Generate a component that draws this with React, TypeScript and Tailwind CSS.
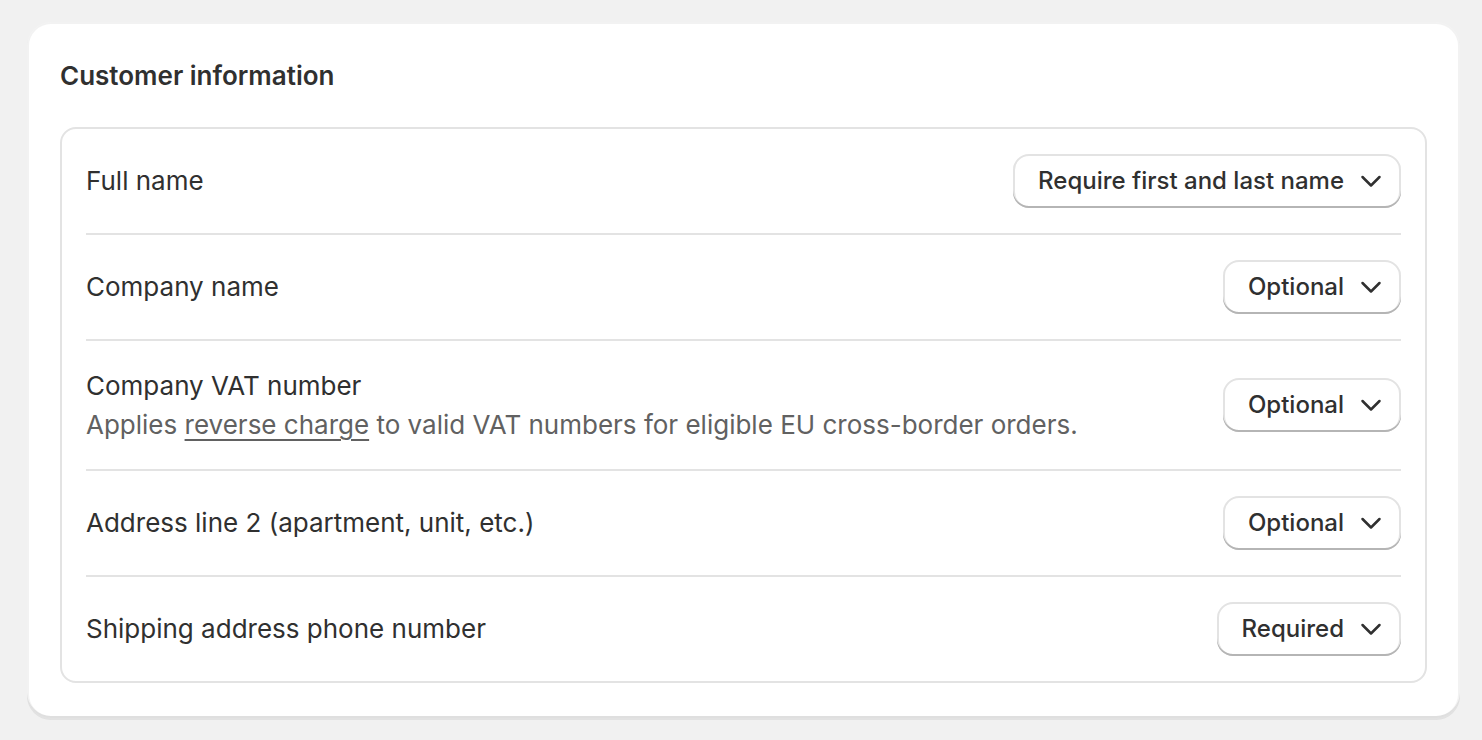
import { ReactNode } from "react"

type Row = {
  label: string
  hint?: ReactNode
  value: string
}

const rows: Row[] = [
  { label: "Full name", value: "Require first and last name" },
  { label: "Company name", value: "Optional" },
  {
    label: "Company VAT number",
    hint: (
      <>
        Applies{" "}
        <span className="underline decoration-[2px] underline-offset-[5px]">reverse charge</span> to valid VAT
        numbers for eligible EU cross-border orders.
      </>
    ),
    value: "Optional",
  },
  { label: "Address line 2 (apartment, unit, etc.)", value: "Optional" },
  { label: "Shipping address phone number", value: "Required" },
]

function Chevron() {
  return (
    <svg width="40" height="40" viewBox="0 0 20 20" fill="none" className="shrink-0">
      <path d="M5.75 8L10 12.25L14.25 8" stroke="#303030" strokeWidth="1.25" strokeLinecap="round" strokeLinejoin="round" />
    </svg>
  )
}

function SelectButton({ value }: { value: string }) {
  return (
    <button className="flex h-[54px] items-center rounded-[16px] bg-white pl-[25px] pr-[10px] text-[24px] font-[550] text-[#303030] shadow-[inset_0_-2px_0_0_#b5b5b5,inset_0_0_0_2px_#e3e3e3]">
      <span className="mr-[7px]">{value}</span>
      <Chevron />
    </button>
  )
}

export default function App() {
  return (
    <div
      className="min-h-[740px] bg-[#f1f1f1] pl-[27px] pr-[22px] pt-[22px] text-[#303030]"
      style={{ fontFamily: "Inter, 'Noto Sans', sans-serif" }}
    >
      <div className="rounded-[24px] bg-white px-[33px] pb-[35px] pt-[36px] shadow-[0_2px_0_0_rgba(26,26,26,0.07),inset_0_0_0_2px_rgba(0,0,0,0.05),inset_0_-2px_0_0_rgba(0,0,0,0.08)]">
        <h2 className="mb-[33px] text-[26px] font-semibold leading-[36px]">Customer information</h2>

        <div className="rounded-[16px] border-2 border-[#e3e3e3] px-[24px]">
          {rows.map((row, i) => (
            <div
              key={row.label}
              className={`flex items-center justify-between py-[25px] ${i > 0 ? "border-t-2 border-[#e3e3e3]" : ""}`}
            >
              <div className="text-[26px] leading-[40px]">
                <div>{row.label}</div>
                {row.hint && <div className="leading-[38px] text-[#616161]">{row.hint}</div>}
              </div>
              <SelectButton value={row.value} />
            </div>
          ))}
        </div>
      </div>
    </div>
  )
}
